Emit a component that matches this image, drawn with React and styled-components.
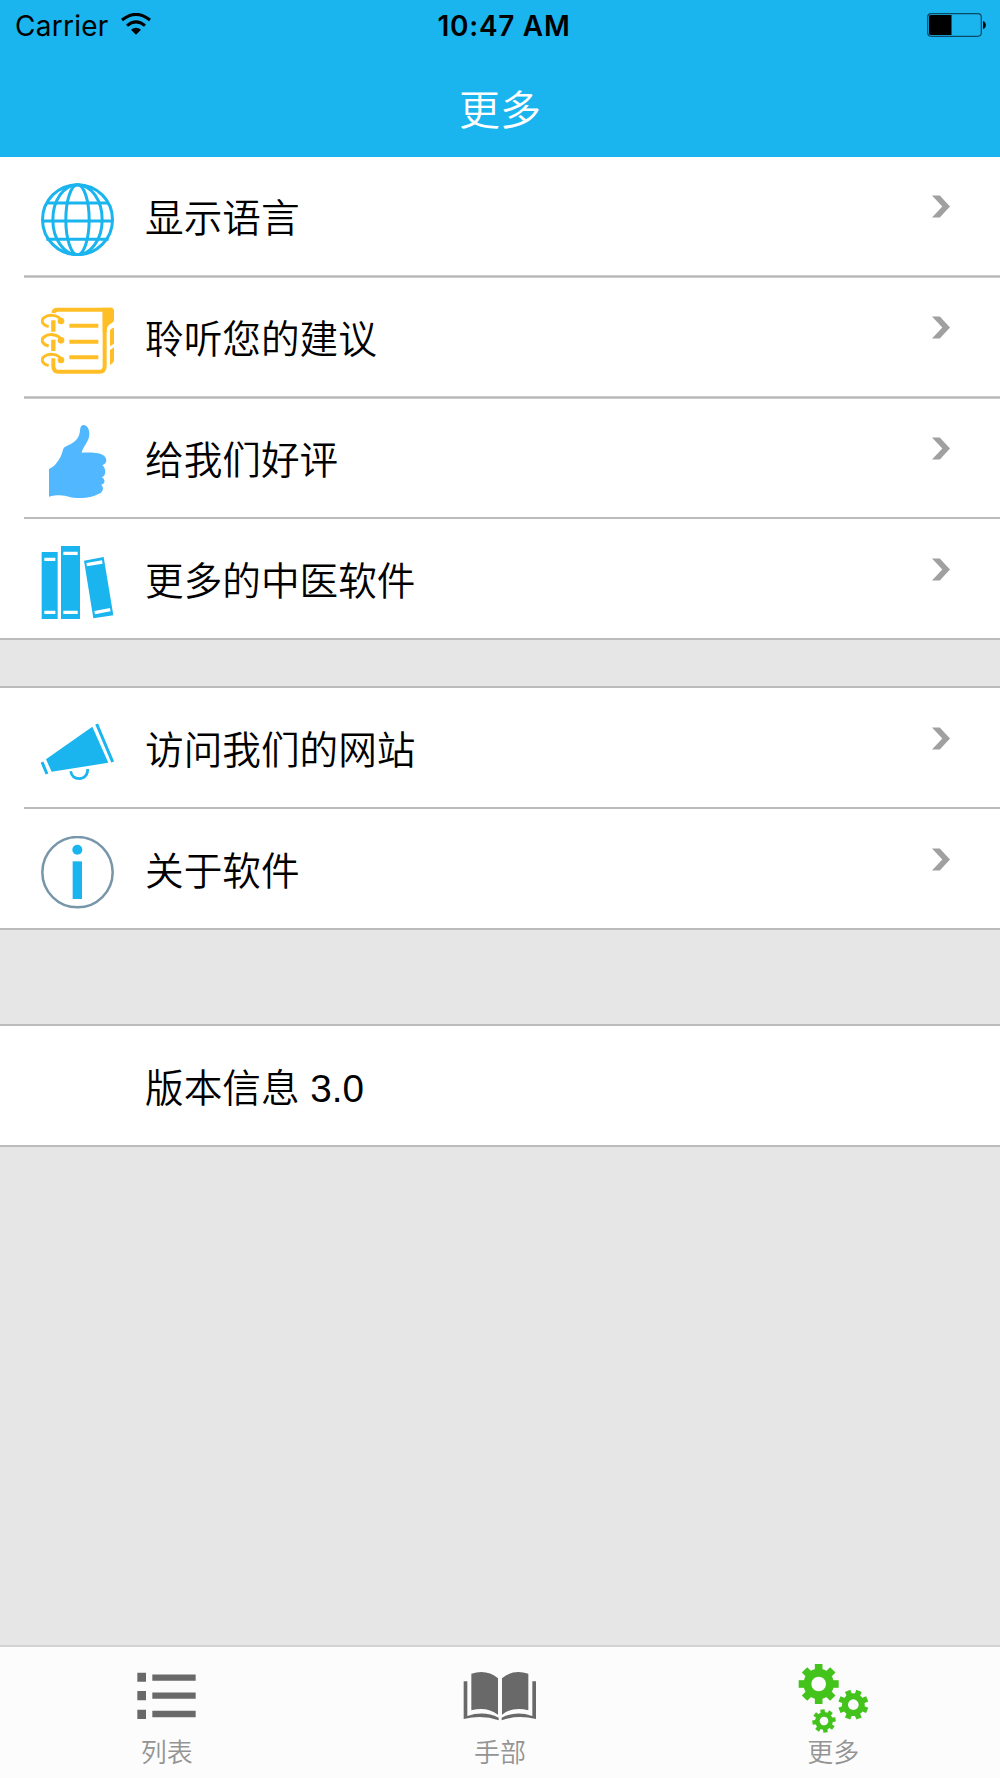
import styled, { createGlobalStyle } from "styled-components";

const blue = "#1ab4ef";
const amber = "#ffbe26";
const dark = "#696969";
const green = "#43c31c";

const GlobalStyle = createGlobalStyle`
  * {
    box-sizing: border-box;
  }
  body {
    margin: 0;
    background: #e6e6e6;
  }
`;
const Screen = styled.div`
  display: flex;
  flex-direction: column;
  width: 1000px;
  height: 1778px;
  background: #e6e6e6;
  color: #000;
  font-family: "Liberation Sans", "Noto Sans CJK SC", sans-serif;
  font-weight: 350;
`;
const Header = styled.header`
  height: 157px;
  background: ${blue};
`;
const StatusBar = styled.div`
  display: grid;
  grid-template-columns: 1fr auto 1fr;
  align-items: center;
  height: 50px;
  padding: 0 14px 0 15px;
  font-family: Inter, sans-serif;
  font-size: 28px;
  font-weight: 400;
  line-height: 52px;
`;
const Carrier = styled.div`
  display: flex;
  align-items: center;
  gap: 12px;
  letter-spacing: 0.25px;
  svg {
    margin-bottom: 5px;
  }
`;
const Clock = styled.div`
  font-weight: 600;
  letter-spacing: 0.7px;
  padding-left: 7px;
`;
const Battery = styled.div`
  display: flex;
  justify-content: flex-end;
  svg {
    margin-bottom: 3px;
  }
`;
const Title = styled.h1`
  margin: 0;
  height: 107px;
  color: #fff;
  font-size: 41px;
  font-weight: 350;
  line-height: 122px;
  text-align: center;
`;
const Group = styled.section`
  background: #fff;
  border-top: ${props => props.$first ? "none" : "2px solid #bcbcbc"};
  border-bottom: 2px solid #bcbcbc;
  margin-bottom: ${props => props.$gap || 0}px;
`;
const Row = styled.div`
  display: flex;
  align-items: flex-start;
  height: ${props => props.$tall ? 119 : 118}px;
  padding: ${props => props.$tall ? 27 : 26}px 50px 0 41px;
`;
const Divider = styled.div`
  height: ${props => props.$soft ? 3 : 2}px;
  margin-left: 24px;
  background: ${props => props.$soft
    ? "linear-gradient(#cbcbcb 1px, #b8b8b8 1px 2px, #cbcbcb 2px)"
    : "#bcbcbc"};
`;
const IconBox = styled.div`
  width: 73px;
  height: 73px;
  margin-right: 31px;
  svg {
    display: block;
  }
`;
const Label = styled.div`
  flex: 1;
  font-size: 38.65px;
  line-height: 72px;
  white-space: pre;
`;
const Arrow = styled.svg`
  display: block;
  margin-top: 12px;
`;
const TabBar = styled.nav`
  display: grid;
  grid-template-columns: repeat(3, 1fr);
  height: 133px;
  margin-top: auto;
  border-top: 2px solid #d2d2d2;
  background: #fcfcfc;
`;
const Tab = styled.div`
  display: flex;
  flex-direction: column;
  align-items: center;
  padding-top: 16px;
  color: #949494;
  font-size: 26px;
  line-height: 34px;
  svg {
    display: block;
  }
`;

function Icon({children}) {
  return (
    <svg width="73" height="73" viewBox="0 0 219 219" fill="none">{children}</svg>
  );
}

function GlobeIcon() {
  return (
    <Icon>
      <g stroke={blue} strokeWidth="9">
        <circle cx="109.5" cy="110" r="105" />
        <ellipse cx="109.5" cy="110" rx="74" ry="105" />
        <ellipse cx="109.5" cy="110" rx="35" ry="105" />
        <path d="M16 60H203M3 114H216M16 169H203" />
      </g>
    </Icon>
  );
}

function NotebookIcon() {
  return (
    <Icon>
      <path d="M37 27Q38 17 49 17H213" stroke={amber} strokeWidth="12" />
      <path d="M37 49V83M37 107V141" stroke={amber} strokeWidth="13" />
      <path d="M37 163V186Q37 203 52 203H176Q191 203 191 186V20" stroke={amber} strokeWidth="12" />
      <path d="M185 11H209Q219 11 219 21V52Q203 62 197 72V84H185Z" fill={amber} />
      <path d="M207 80Q208 74 219 71V119L207 127ZM207 138L219 130V170Q217 178 207 183Z" fill={amber} />
      {[0, 58, 117].map(y => (
        <g key={y} transform={`translate(0 ${y})`}>
          <path d="M23 68C4 63 -2 50 9 41C22 30 49 31 62 49" stroke={amber} strokeWidth="9" />
          <circle cx="60" cy="51" r="10" fill={amber} />
        </g>
      ))}
      <path d="M85 65H172M85 113H172M85 160H172" stroke={amber} strokeWidth="12" />
    </Icon>
  );
}

function ThumbIcon() {
  return (
    <Icon>
      <path
        d="M24 132C43 124 59 101 65 78C68 65 73 66 88 58C106 47 115 37 117 17C118 4 122 0 128 0C138 0 146 13 145 29C144 49 126 64 122 83C148 82 172 83 184 89C199 96 201 115 184 121C195 129 197 153 182 157C194 162 193 178 180 179C190 186 187 202 172 207C152 219 117 222 89 217C67 209 49 209 24 215Z"
        fill="#51b7ff"
      />
    </Icon>
  );
}

function BooksIcon() {
  return (
    <Icon>
      <path d="M2 18H50V219H2ZM60 0H117V219H60ZM129 44L188 33L217 208L157 217Z" fill={blue} />
      <path d="M10 40H43M10 199H43M67 22H110M67 199H110M137 56L184 48M161 200L208 191" stroke="#fff" strokeWidth="10" />
    </Icon>
  );
}

function MegaphoneIcon() {
  return (
    <Icon>
      <path d="M154 35L202 143L32 170L15 133Z" fill={blue} />
      <path d="M167 27L215 141M3 141L18 177" stroke={blue} strokeWidth="9" />
      <path d="M89 169C92 185 102 191 115 191C130 191 141 179 140 162" stroke={blue} strokeWidth="8" />
    </Icon>
  );
}

function InfoIcon() {
  return (
    <Icon>
      <circle cx="109.5" cy="108.5" r="105.5" stroke="#7896aa" strokeWidth="7.5" />
      <circle cx="109" cy="41" r="15" fill={blue} />
      <path d="M95 76H123V189H95Z" fill={blue} />
    </Icon>
  );
}

function ListIcon() {
  return (
    <Icon>
      <path d="M22 29H48V56H22ZM22 84H48V112H22ZM22 140H48V168H22Z" fill={dark} />
      <path d="M67 44H197M67 98H197M67 153H197" stroke={dark} strokeWidth="19" />
    </Icon>
  );
}

function BookIcon() {
  return (
    <Icon>
      <path
        d="M25 32Q72 18 105 46V155Q72 130 25 142ZM196 32Q149 18 117 46V155Q149 130 196 142Z"
        fill={dark}
      />
      <path
        d="M2 55H13V159Q63 142 107 164V172Q59 155 2 168ZM219 55H208V159Q158 142 116 164V172Q162 155 219 168Z"
        fill={dark}
      />
    </Icon>
  );
}

function Gear({x, y, r, hole, turn}) {
  const tooth = r * 0.38;
  return (
    <g transform={`translate(${x} ${y}) rotate(${turn})`}>
      <circle r={(r * 0.76 + hole) / 2} stroke={green} strokeWidth={r * 0.76 - hole} />
      {[0, 45, 90, 135, 180, 225, 270, 315].map(angle => (
        <rect
          key={angle}
          x={-tooth / 2}
          y={-r}
          width={tooth}
          height={r * 0.4}
          fill={green}
          transform={`rotate(${angle})`}
        />
      ))}
    </g>
  );
}

function GearsIcon() {
  return (
    <Icon>
      <Gear x={65} y={63} r={60} hole={22} turn={0} />
      <Gear x={169} y={125} r={45} hole={16} turn={22.5} />
      <Gear x={81} y={174} r={35} hole={13} turn={-8} />
    </Icon>
  );
}

function WifiIcon() {
  return (
    <svg width="30" height="22" viewBox="0 0 90 66" fill="none">
      <path d="M3 21Q45 -13 87 21M18 38Q45 15 72 38" stroke="#000" strokeWidth="9" />
      <path d="M30 50Q45 38 60 50L45 65Z" fill="#000" />
    </svg>
  );
}

function BatteryIcon() {
  return (
    <svg width="59" height="24" viewBox="0 0 59 24" fill="none">
      <rect x="0.7" y="0.7" width="53.6" height="22.6" rx="3.5" stroke="#0a4a63" strokeWidth="1.2" />
      <path d="M4 2H24.5V22H4Q2 22 2 20V4Q2 2 4 2Z" fill="#000" />
      <path d="M56 8Q58.8 9 58.8 12Q58.8 15 56 16Z" fill="#000" />
    </svg>
  );
}

function MenuRow({icon, label, tall, arrow = true}) {
  return (
    <Row $tall={tall}>
      <IconBox>{icon}</IconBox>
      <Label>{label}</Label>
      {arrow && (
        <Arrow width="18" height="23" viewBox="0 0 18 23">
          <path d="M0 0.5H7.8L18 11.5L7.8 22.5H0L10.3 11.5Z" fill="#a0a0a0" />
        </Arrow>
      )}
    </Row>
  );
}

export default function App() {
  return (
    <Screen>
      <GlobalStyle />
      <Header>
        <StatusBar>
          <Carrier>
            Carrier
            <WifiIcon />
          </Carrier>
          <Clock>10:47 AM</Clock>
          <Battery>
            <BatteryIcon />
          </Battery>
        </StatusBar>
        <Title>更多</Title>
      </Header>
      <Group $first={1} $gap={46}>
        <MenuRow icon={<GlobeIcon />} label="显示语言" />
        <Divider $soft={1} />
        <MenuRow icon={<NotebookIcon />} label="聆听您的建议" />
        <Divider $soft={1} />
        <MenuRow icon={<ThumbIcon />} label="给我们好评" />
        <Divider />
        <MenuRow icon={<BooksIcon />} label="更多的中医软件" tall={1} />
      </Group>
      <Group $gap={94}>
        <MenuRow icon={<MegaphoneIcon />} label="访问我们的网站" tall={1} />
        <Divider />
        <MenuRow icon={<InfoIcon />} label="关于软件" tall={1} />
      </Group>
      <Group>
        <MenuRow label="版本信息 3.0" tall={1} arrow={false} />
      </Group>
      <TabBar>
        <Tab>
          <ListIcon />
          列表
        </Tab>
        <Tab>
          <BookIcon />
          手部
        </Tab>
        <Tab>
          <GearsIcon />
          更多
        </Tab>
      </TabBar>
    </Screen>
  );
}
